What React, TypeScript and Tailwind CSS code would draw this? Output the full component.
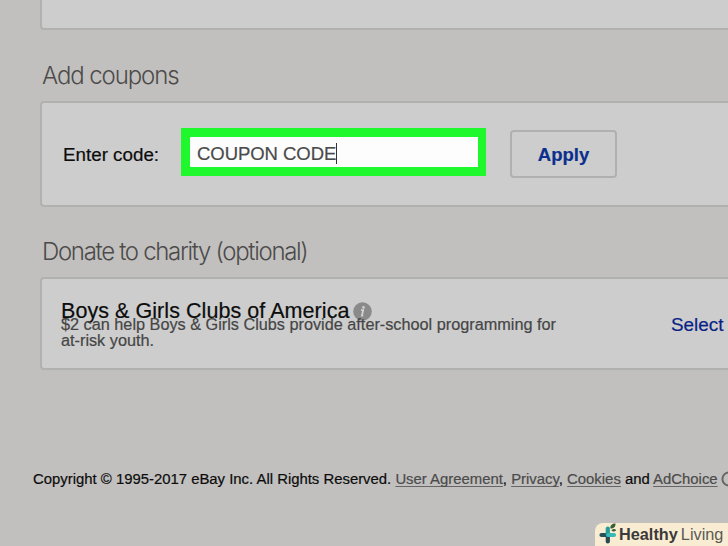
import React from 'react';

interface PanelProps {
  className: string;
  children?: React.ReactNode;
}

// Cards run off the right side of the page, so only the left corners are rounded
const Panel: React.FC<PanelProps> = ({ className, children }) => (
  <section className={`ml-10 shrink-0 border-2 border-r-0 border-[#b1b1b0] bg-[#cdcdcd] ${className}`}>
    {children}
  </section>
);

const FooterLink: React.FC<{ children: React.ReactNode }> = ({ children }) => (
  <a className="text-[#4b4b4b] underline decoration-[#666] decoration-1 underline-offset-2 [text-decoration-skip-ink:none]">
    {children}
  </a>
);

const InfoIcon = () => (
  <svg className="ml-[3px] h-[19px] w-[19px]" viewBox="0 0 19 19">
    <circle cx="9.5" cy="9.5" r="9.3" fill="#8a8a8a" />
    <circle cx="10.5" cy="5.4" r="1.3" fill="#d2d2d2" />
    <path d="M8 8.2h2.2l-1.3 5.4h1.3" fill="none" stroke="#d2d2d2" strokeWidth="1.8" />
  </svg>
);

const HealthyLivingLogo = () => (
  <svg className="h-[23px] w-5 shrink-0" viewBox="0 0 20 23">
    <g strokeWidth="4.2" strokeLinecap="round">
      <path d="M9.8 13v5.500" stroke="#2a4a52" />
      <path d="M3.500 12H9" stroke="#24505a" />
      <path d="M9.800 5.500V12" stroke="#249c9c" />
      <path d="M10.500 12h5.500" stroke="#39b9b5" />
    </g>
    <path d="M12.500 5.500c-.6-3 1.500-5 5-5 .2 3-1.500 5-5 5z" fill="#35602f" />
    <path d="M13.500 7.500c1-1.800 3.200-2 4.700-.5-1.200 1.800-3.200 2-4.700.5z" fill="#35602f" />
  </svg>
);

export default function App() {
  return (
    <div className="relative flex h-[546px] w-[728px] flex-col overflow-hidden bg-[#c1c0be] font-['Liberation_Sans',Arial,sans-serif] whitespace-nowrap text-[#0c0c0c] [-webkit-text-stroke:0.2px]">
      <Panel className="h-[30px] rounded-bl border-t-0" />

      <h2 className="mt-[31px] ml-[42px] h-10 font-[Inter,sans-serif] text-[24px] leading-[30px] font-light tracking-[-1.1px] text-[#4c4b4a] [-webkit-text-stroke:0]">
        Add coupons
      </h2>
      <Panel className="flex h-[106px] items-center rounded-l pl-[21px]">
        <label className="w-[118px] pt-0.5 text-[18.8px]">Enter code:</label>
        <div className="-mt-1 flex h-12 w-[305px] items-center border-8 border-y-9 border-l-9 border-[#20f82e] bg-[#fdfdfd] pt-[3px] pl-[7px] text-[18.5px] text-[#4a4a4a]">
          <span className="tracking-[-0.05px]">COUPON CODE</span>
          <span className="h-[21px] w-px bg-[#333]" />
        </div>
        <button className="ml-6 h-12 w-[107px] rounded border-2 border-[#b0b0b0] pt-px text-[18.5px] font-bold text-[#0b2f8c]">
          Apply
        </button>
      </Panel>

      <h2 className="mt-[30px] ml-[42px] h-10 font-[Inter,sans-serif] text-[24px] leading-[30px] font-light tracking-[-1.32px] text-[#4c4b4a] [-webkit-text-stroke:0]">
        Donate to charity (optional)
      </h2>
      <Panel className="flex h-[93px] rounded-l pt-[22px] pl-[19px]">
        <div className="w-[610px]">
          <h3 className="flex h-5 items-center text-[21.5px] tracking-[0.06px]">
            Boys &amp; Girls Clubs of America
            <InfoIcon />
          </h3>
          <p className="-mt-[5px] text-[16.25px] leading-4 text-[#454545]">
            $2 can help Boys &amp; Girls Clubs provide after-school programming for
            <br />
            at-risk youth.
          </p>
        </div>
        <a className="pt-[14px] text-[18.9px] leading-5 text-[#0a1f86]">Select</a>
      </Panel>

      <footer className="mt-[99px] ml-[33px] flex h-5 items-center text-[14.89px] leading-4">
        <p>
          Copyright © 1995-2017 eBay Inc. All Rights Reserved. <FooterLink>User Agreement</FooterLink>,{' '}
          <FooterLink>Privacy</FooterLink>, <FooterLink>Cookies</FooterLink> and <FooterLink>AdChoice</FooterLink>
        </p>
        <svg className="ml-[3px] h-4 w-4 shrink-0" viewBox="0 0 16 16">
          <circle cx="8" cy="8" r="6.6" fill="none" stroke="#666" strokeWidth="2" />
        </svg>
      </footer>

      {/* Watermark */}
      <div className="absolute right-0 bottom-0 flex h-[23px] w-[133px] items-center rounded-tl-lg bg-[#f8edd3] pl-[3px] text-[16.3px] text-[#3c3a38] [-webkit-text-stroke:0]">
        <HealthyLivingLogo />
        <span className="ml-px font-bold">Healthy</span>
        <span className="ml-[3px] text-[#5c5953]">Living</span>
      </div>
    </div>
  );
}
